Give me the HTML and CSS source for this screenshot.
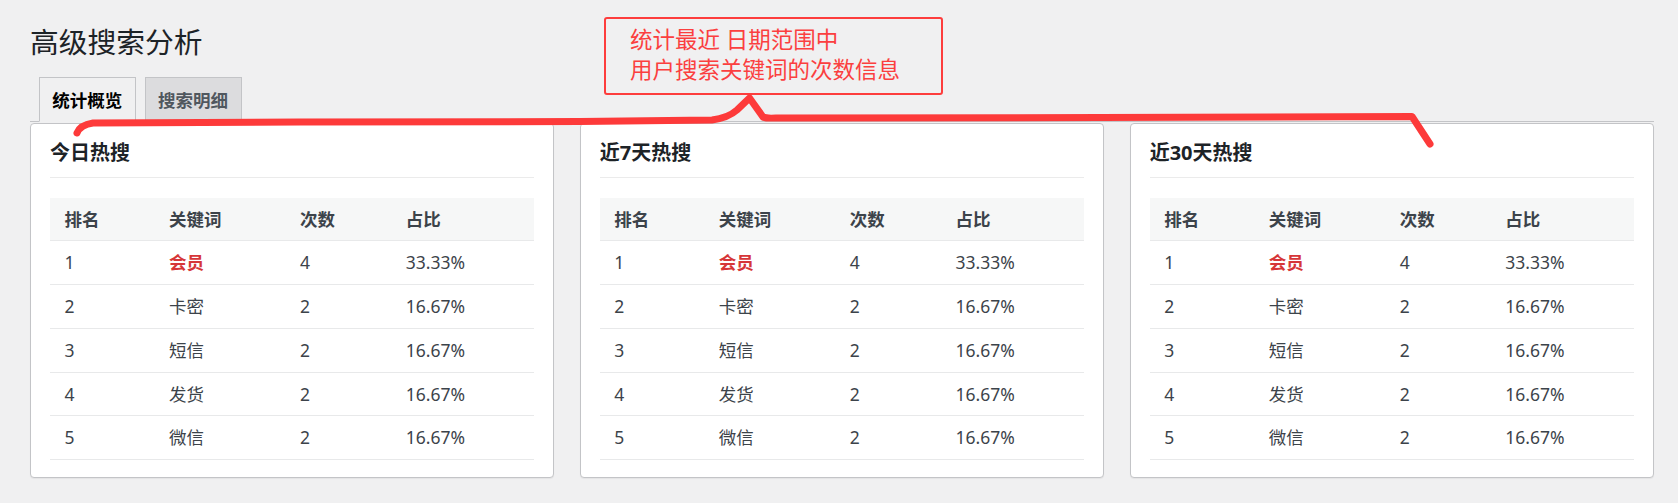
FILE: index.html
```html
<!DOCTYPE html>
<html lang="zh-CN">
<head>
<meta charset="utf-8">
<title>高级搜索分析</title>
<link rel="stylesheet" href="styles.css">
</head>
<body>
<div class="wrap">
  <h1 class="page-title">高级搜索分析</h1>
  <nav class="tabs">
    <a class="tab tab-active">统计概览</a>
    <a class="tab">搜索明细</a>
  </nav>
  <div class="cards">
    <section class="card">
      <h2 class="card-title">今日热搜</h2>
      <table class="rank">
        <colgroup><col class="c1"><col class="c2"><col class="c3"><col></colgroup>
        <thead><tr><th>排名</th><th>关键词</th><th>次数</th><th>占比</th></tr></thead>
        <tbody>
          <tr><td>1</td><td class="hot">会员</td><td>4</td><td>33.33%</td></tr>
          <tr><td>2</td><td>卡密</td><td>2</td><td>16.67%</td></tr>
          <tr><td>3</td><td>短信</td><td>2</td><td>16.67%</td></tr>
          <tr><td>4</td><td>发货</td><td>2</td><td>16.67%</td></tr>
          <tr><td>5</td><td>微信</td><td>2</td><td>16.67%</td></tr>
        </tbody>
      </table>
    </section>
    <section class="card">
      <h2 class="card-title">近7天热搜</h2>
      <table class="rank">
        <colgroup><col class="c1"><col class="c2"><col class="c3"><col></colgroup>
        <thead><tr><th>排名</th><th>关键词</th><th>次数</th><th>占比</th></tr></thead>
        <tbody>
          <tr><td>1</td><td class="hot">会员</td><td>4</td><td>33.33%</td></tr>
          <tr><td>2</td><td>卡密</td><td>2</td><td>16.67%</td></tr>
          <tr><td>3</td><td>短信</td><td>2</td><td>16.67%</td></tr>
          <tr><td>4</td><td>发货</td><td>2</td><td>16.67%</td></tr>
          <tr><td>5</td><td>微信</td><td>2</td><td>16.67%</td></tr>
        </tbody>
      </table>
    </section>
    <section class="card">
      <h2 class="card-title">近30天热搜</h2>
      <table class="rank">
        <colgroup><col class="c1"><col class="c2"><col class="c3"><col></colgroup>
        <thead><tr><th>排名</th><th>关键词</th><th>次数</th><th>占比</th></tr></thead>
        <tbody>
          <tr><td>1</td><td class="hot">会员</td><td>4</td><td>33.33%</td></tr>
          <tr><td>2</td><td>卡密</td><td>2</td><td>16.67%</td></tr>
          <tr><td>3</td><td>短信</td><td>2</td><td>16.67%</td></tr>
          <tr><td>4</td><td>发货</td><td>2</td><td>16.67%</td></tr>
          <tr><td>5</td><td>微信</td><td>2</td><td>16.67%</td></tr>
        </tbody>
      </table>
    </section>
  </div>
</div>
<div class="note">统计最近 日期范围中<br>用户搜索关键词的次数信息</div>
<svg class="scribble" width="1678" height="503" viewBox="0 0 1678 503" aria-hidden="true">
  <path d="M77 133 Q80 125 93 123 L300 122 L580 121.5 L712 120 Q728 118 737 110 L749.5 98 L763 117 Q766 118.5 776 118 L1100 117.5 L1412 116.5 L1430 144" fill="none" stroke="#fd3a3a" stroke-width="7" stroke-linecap="round" stroke-linejoin="round"/>
</svg>
</body>
</html>
```
FILE: styles.css
```css
html, body {
  margin: 0;
  padding: 0;
}
body {
  background: #f0f0f1;
  font-family: "Noto Sans", "Noto Sans CJK SC", sans-serif;
  color: #3c434a;
  width: 1678px;
  height: 503px;
  overflow: hidden;
  position: relative;
}
.wrap {
  padding: 23px 24px 0 30px;
}
.page-title {
  margin: 0;
  font-size: 28.75px;
  line-height: 37.4px;
  font-weight: 400;
  color: #1d2327;
}
.tabs {
  display: flex;
  margin-top: 17px;
  padding-left: 8.75px;
  border-bottom: 1px solid #c3c4c7;
  height: 43.5px;
}
.tab {
  display: block;
  box-sizing: border-box;
  height: 44.5px;
  padding: 6.25px 12.5px;
  line-height: 30px;
  font-size: 17.5px;
  font-weight: 700;
  color: #50575e;
  background: #dcdcde;
  border: 1px solid #c3c4c7;
  margin-right: 8.75px;
  text-decoration: none;
}
.tab-active {
  background: #f0f0f1;
  color: #000;
  border-bottom-color: #f0f0f1;
}
.cards {
  display: flex;
  gap: 25.5px;
  margin-top: 1.5px;
}
.card {
  flex: 1 1 0;
  min-width: 0;
  background: #fff;
  border: 1px solid #c3c4c7;
  border-radius: 4px;
  padding: 0 19px 17px;
  box-shadow: 0 1px 1px rgba(0, 0, 0, 0.05);
}
.card-title {
  margin: 0;
  padding: 15px 0 10px;
  font-size: 20px;
  line-height: 28px;
  font-weight: 700;
  color: #1d2327;
  border-bottom: 1px solid #ebebeb;
}
.rank {
  width: 100%;
  margin-top: 19.3px;
  border-collapse: separate;
  border-spacing: 0;
  table-layout: fixed;
  font-size: 17.5px;
}
.rank .c1 { width: 104.5px; }
.rank .c2 { width: 131px; }
.rank .c3 { width: 105.7px; }
.rank th,
.rank td {
  padding: 0 0 0 14.5px;
  line-height: 42.75px;
  text-align: left;
  border-bottom: 1px solid #e8e9ea;
  white-space: nowrap;
  color: #3c434a;
}
.rank th {
  background: #f6f7f7;
  font-weight: 700;
}
.rank td {
  font-weight: 400;
}
.rank td.hot {
  color: #d63638;
  font-weight: 700;
}
.note {
  position: absolute;
  left: 604.3px;
  top: 17.3px;
  width: 338.4px;
  height: 77.7px;
  box-sizing: border-box;
  border: 2px solid #fd3d3d;
  border-radius: 3px;
  padding: 6px 0 0 23.7px;
  font-size: 22.5px;
  line-height: 30px;
  color: #fb3f3f;
  font-weight: 400;
}
.scribble {
  position: absolute;
  left: 0;
  top: 0;
  pointer-events: none;
}
```
